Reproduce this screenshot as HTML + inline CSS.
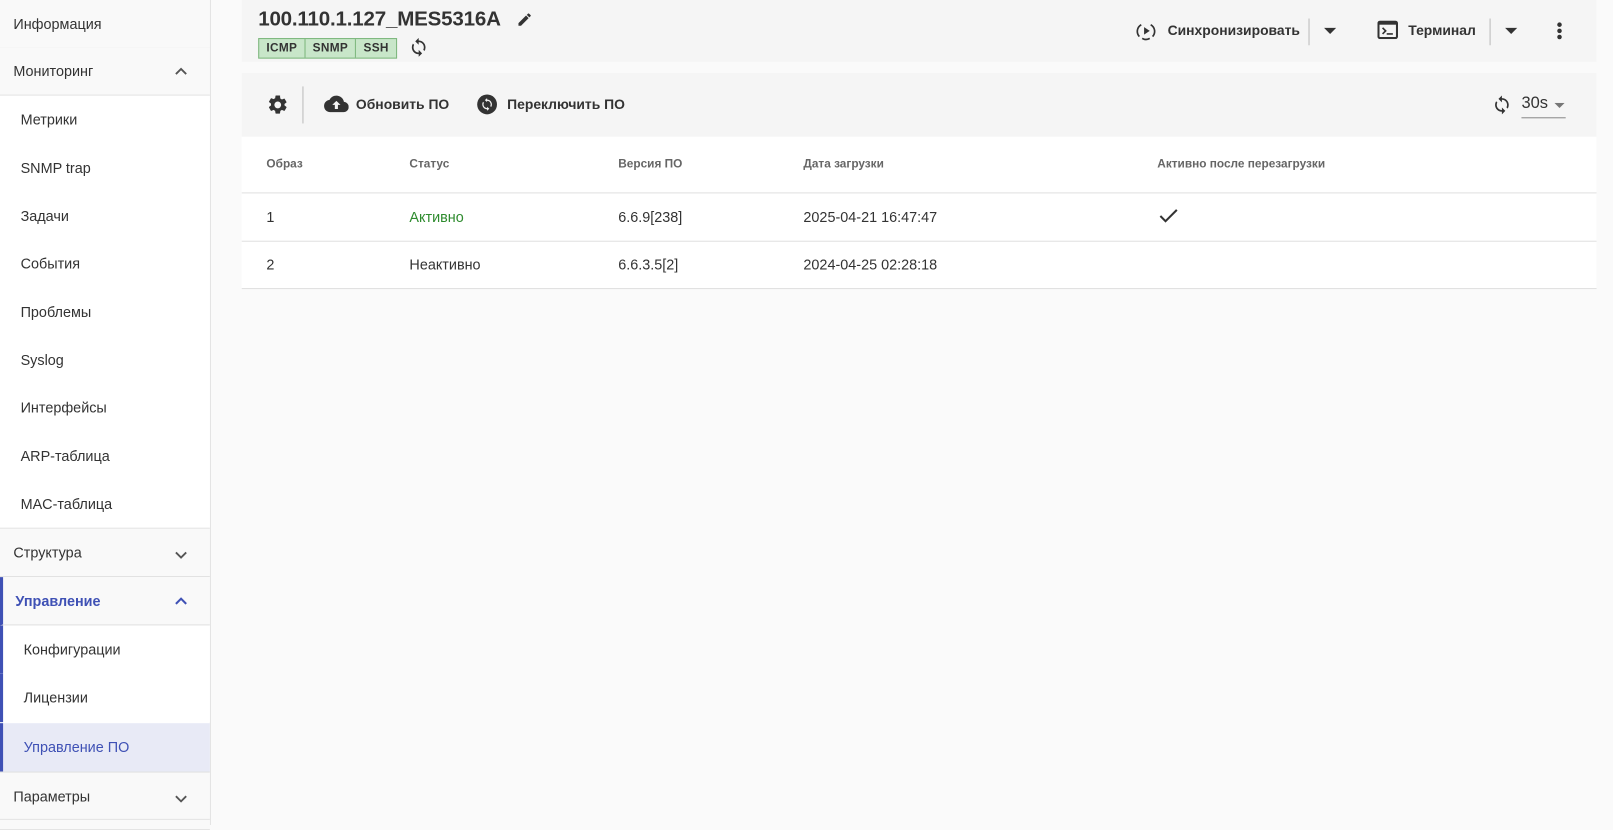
<!DOCTYPE html>
<html><head><meta charset="utf-8"><style>
*{box-sizing:border-box;margin:0;padding:0}
html,body{width:1613px;height:825px;overflow:hidden;background:#fafafa}
#w{position:absolute;left:0;top:0;width:1568px;height:802px;transform:scale(1.0287);transform-origin:0 0;font-family:"Liberation Sans",sans-serif;color:#333;font-size:14px}
.side{position:absolute;left:0;top:0;width:205px;height:802px;border-right:1px solid #e0e0e0;background:#fff}
.it{position:absolute;left:0;width:204px;height:47px;line-height:46px;font-size:14px;border-bottom:1px solid #e0e0e0}
.h{background:#f9f9f9;padding-left:13px;color:#333}
.s{background:#fff;padding-left:20px;border-bottom:none}
.chev{position:absolute;right:22px;top:0;font-size:12px;color:#555}
.top{position:absolute;left:235px;top:0;width:1317px;height:60px;background:#f5f5f5}
.tb{position:absolute;left:235px;top:71px;width:1317px;height:62px;background:#f5f5f5}
.tbl{position:absolute;left:235px;top:133px;width:1317px;height:148px;background:#fff}
.row{position:absolute;left:0;width:1317px;border-bottom:1px solid #e0e0e0}
.c{position:absolute;top:0}
.btn{position:absolute;font-size:13.5px;font-weight:bold;color:#333}
</style></head><body><div id="w">
<div class="side">
<div class="it h" style="top:0">Информация</div>
<div class="it h" style="top:46px">Мониторинг<span class="chev"><svg width="12" height="8" viewBox="0 0 12 8"><path d="M1 7L6 2L11 7" fill="none" stroke="#555" stroke-width="1.8"/></svg></span></div>
<div class="it s" style="top:93px">Метрики</div>
<div class="it s" style="top:140px">SNMP trap</div>
<div class="it s" style="top:187px">Задачи</div>
<div class="it s" style="top:233px">События</div>
<div class="it s" style="top:280px">Проблемы</div>
<div class="it s" style="top:327px">Syslog</div>
<div class="it s" style="top:373px">Интерфейсы</div>
<div class="it s" style="top:420px">ARP-таблица</div>
<div class="it s" style="top:467px;border-bottom:1px solid #e0e0e0">MAC-таблица</div>
<div class="it h" style="top:514px">Структура<span class="chev" style="top:3px"><svg width="12" height="8" viewBox="0 0 12 8"><path d="M1 1L6 6L11 1" fill="none" stroke="#555" stroke-width="1.8"/></svg></span></div>
<div class="it h" style="top:561px;color:#3f51b5;font-weight:bold;border-left:3px solid #3f51b5;padding-left:12px">Управление<span class="chev"><svg width="12" height="8" viewBox="0 0 12 8"><path d="M1 7L6 2L11 7" fill="none" stroke="#3f51b5" stroke-width="2"/></svg></span></div>
<div class="it s" style="top:608px;border-left:3px solid #3f51b5;padding-left:20px">Конфигурации</div>
<div class="it s" style="top:655px;border-left:3px solid #3f51b5;padding-left:20px">Лицензии</div>
<div class="it s" style="top:703px;border-left:3px solid #3f51b5;padding-left:20px;background:#e8eaf6;color:#3f51b5;height:47px">Управление ПО</div>
<div class="it h" style="top:750px;border-top:1px solid #e0e0e0">Параметры<span class="chev" style="top:3px"><svg width="12" height="8" viewBox="0 0 12 8"><path d="M1 1L6 6L11 1" fill="none" stroke="#555" stroke-width="1.8"/></svg></span></div>
<div class="it h" style="top:797px;height:10px"></div>
</div>

<div class="top">
<div style="position:absolute;left:16px;top:8px;font-size:20px;font-weight:bold;color:#333;letter-spacing:-0.2px">100.110.1.127_MES5316A</div>
<svg style="position:absolute;left:267px;top:11px" width="16" height="16" viewBox="0 0 24 24"><path d="M3 17.25V21h3.75L17.81 9.94l-3.75-3.75L3 17.25zM20.71 7.04a1 1 0 000-1.41l-2.34-2.34a1 1 0 00-1.41 0l-1.83 1.83 3.75 3.75 1.83-1.83z" fill="#333"/></svg>
<div style="position:absolute;left:16px;top:37px;height:20px;display:flex;border:1px solid #7cb67c;background:#c8e6c9;font-size:11.5px;font-weight:bold;color:#333;line-height:18px;letter-spacing:.3px">
<span style="padding:0 7px;border-right:1px solid #7cb67c">ICMP</span><span style="padding:0 7px;border-right:1px solid #7cb67c">SNMP</span><span style="padding:0 7px">SSH</span></div>
<svg style="position:absolute;left:162px;top:36px" width="20" height="20" viewBox="0 0 24 24"><path d="M12 4V1L8 5l4 4V6c3.31 0 6 2.69 6 6 0 1.01-.25 1.97-.7 2.8l1.46 1.46A7.93 7.93 0 0020 12c0-4.42-3.58-8-8-8zm0 14c-3.31 0-6-2.69-6-6 0-1.01.25-1.97.7-2.8L5.24 7.74A7.93 7.93 0 004 12c0 4.42 3.58 8 8 8v3l4-4-4-4v3z" fill="#333"/></svg>
<svg style="position:absolute;left:868px;top:19px" width="22" height="22" viewBox="0 0 24 24"><path d="M10 8v8l6-4z" fill="#333"/><path d="M7 5.5A8 8 0 005 18M17 5.5A8 8 0 0119 18M8 20a8 8 0 008 0" fill="none" stroke="#333" stroke-width="1.8"/></svg>
<div class="btn" style="left:900px;top:22px">Синхронизировать</div>
<div style="position:absolute;left:1037px;top:18px;width:1px;height:26px;background:#bbb"></div>
<svg style="position:absolute;left:1052px;top:27px" width="12" height="6"><path d="M0 0h12L6 6z" fill="#333"/></svg>
<svg style="position:absolute;left:1104px;top:20px" width="20" height="18" viewBox="0 0 20 18"><rect x="1" y="1" width="18" height="16" rx="1.5" fill="none" stroke="#333" stroke-width="2"/><rect x="1" y="1" width="18" height="3" fill="#333"/><path d="M5 7l3 3-3 3" fill="none" stroke="#333" stroke-width="1.6"/><path d="M9 13h6" stroke="#333" stroke-width="1.6"/></svg>
<div class="btn" style="left:1134px;top:22px">Терминал</div>
<div style="position:absolute;left:1213px;top:18px;width:1px;height:26px;background:#bbb"></div>
<svg style="position:absolute;left:1228px;top:27px" width="12" height="6"><path d="M0 0h12L6 6z" fill="#333"/></svg>
<svg style="position:absolute;left:1278px;top:21px" width="6" height="18"><circle cx="3" cy="3" r="2.2" fill="#333"/><circle cx="3" cy="9" r="2.2" fill="#333"/><circle cx="3" cy="15" r="2.2" fill="#333"/></svg>
</div>

<div class="tb">
<svg style="position:absolute;left:24px;top:20px" width="22" height="22" viewBox="0 0 24 24"><path d="M19.14 12.94a7.07 7.07 0 000-1.88l2.03-1.58a.49.49 0 00.12-.61l-1.92-3.32a.49.49 0 00-.59-.22l-2.39.96a7.03 7.03 0 00-1.62-.94l-.36-2.54A.48.48 0 0013.93 2h-3.84a.48.48 0 00-.48.41l-.36 2.54c-.59.24-1.13.57-1.62.94l-2.39-.96a.49.49 0 00-.59.22L2.73 8.47a.48.48 0 00.12.61l2.03 1.58a7.07 7.07 0 000 1.88l-2.03 1.58a.49.49 0 00-.12.61l1.92 3.32c.12.22.37.29.59.22l2.39-.96c.5.38 1.03.7 1.62.94l.36 2.54c.05.24.24.41.48.41h3.84c.24 0 .44-.17.47-.41l.36-2.54c.59-.24 1.13-.56 1.62-.94l2.39.96c.22.08.47 0 .59-.22l1.92-3.32a.48.48 0 00-.12-.61l-2.01-1.58zM12 15.6A3.6 3.6 0 1112 8.4a3.6 3.6 0 010 7.2z" fill="#333"/></svg>
<div style="position:absolute;left:59px;top:13px;width:1px;height:36px;background:#bbb"></div>
<svg style="position:absolute;left:80px;top:20px" width="24" height="20" viewBox="0 0 24 20"><path d="M19.35 8.04A7.49 7.49 0 0012 2C9.11 2 6.6 3.64 5.35 6.04A5.99 5.99 0 000 12c0 3.31 2.69 6 6 6h13c2.76 0 5-2.24 5-5 0-2.64-2.05-4.78-4.65-4.96z" fill="#333"/><path d="M12 7l-4 4h2.5v4h3v-4H16z" fill="#f5f5f5"/></svg>
<div class="btn" style="left:111px;top:23px">Обновить ПО</div>
<svg style="position:absolute;left:228px;top:20px" width="21" height="21" viewBox="0 0 24 24"><circle cx="12" cy="12" r="11" fill="#333"/><path d="M12 6.5V5L9.5 7.2 12 9.4V8a4 4 0 013.5 5.9l1 1A5.5 5.5 0 0012 6.5zM12 16a4 4 0 01-3.5-5.9l-1-1A5.5 5.5 0 0012 17.5V19l2.5-2.2L12 14.6z" fill="#f5f5f5"/></svg>
<div class="btn" style="left:258px;top:23px">Переключить ПО</div>
<svg style="position:absolute;left:1215px;top:20px" width="20" height="22" viewBox="0 0 24 24"><path d="M12 4V1L8 5l4 4V6c3.31 0 6 2.69 6 6 0 1.01-.25 1.97-.7 2.8l1.46 1.46A7.93 7.93 0 0020 12c0-4.42-3.58-8-8-8zm0 14c-3.31 0-6-2.69-6-6 0-1.01.25-1.97.7-2.8L5.24 7.74A7.93 7.93 0 004 12c0 4.42 3.58 8 8 8v3l4-4-4-4v3z" fill="#333"/></svg>
<div style="position:absolute;left:1244px;top:21px;font-size:16px;color:#333">30s</div>
<svg style="position:absolute;left:1276px;top:29px" width="10" height="5"><path d="M0 0h10L5 5z" fill="#777"/></svg>
<div style="position:absolute;left:1244px;top:43px;width:43px;height:1px;background:#888"></div>
</div>

<div class="tbl">
<div class="row" style="top:0;height:55px;font-size:11.5px;color:#666;font-weight:bold;line-height:54px">
<span class="c" style="left:24px">Образ</span><span class="c" style="left:163px">Статус</span><span class="c" style="left:366px">Версия ПО</span><span class="c" style="left:546px">Дата загрузки</span><span class="c" style="left:890px">Активно после перезагрузки</span></div>
<div class="row" style="top:55px;height:47px;line-height:46px;font-size:14px">
<span class="c" style="left:24px">1</span><span class="c" style="left:163px;color:#2e8b2e">Активно</span><span class="c" style="left:366px">6.6.9[238]</span><span class="c" style="left:546px">2025-04-21 16:47:47</span>
<svg class="c" style="left:892px;top:15px" width="18" height="14" viewBox="0 0 18 14"><path d="M1 7l5 5L17 1" fill="none" stroke="#333" stroke-width="2"/></svg></div>
<div class="row" style="top:102px;height:46px;line-height:45px;font-size:14px">
<span class="c" style="left:24px">2</span><span class="c" style="left:163px">Неактивно</span><span class="c" style="left:366px">6.6.3.5[2]</span><span class="c" style="left:546px">2024-04-25 02:28:18</span></div>
</div>
</div></body></html>
